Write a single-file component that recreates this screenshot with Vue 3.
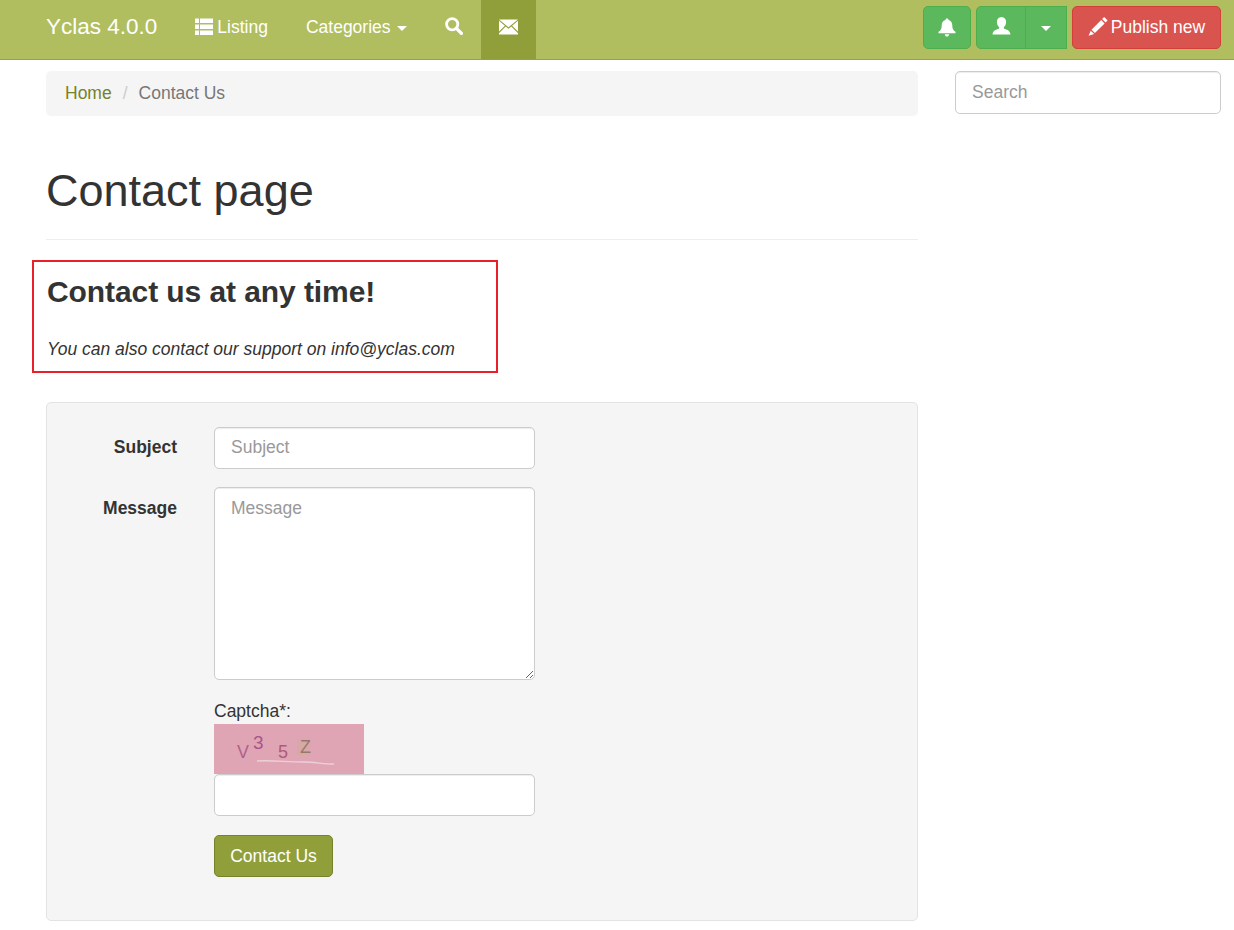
<template>
  <nav class="navbar">
    <a class="brand" href="#">Yclas 4.0.0</a>
    <ul class="nav-items">
      <li v-for="item in navItems" :key="item.key" class="nav-item" :class="{ active: item.active }">
        <svg v-if="item.key === 'listing'" class="nav-icon list-icon" viewBox="0 0 18 18">
          <path fill="currentColor" d="M0 0.500h4v4.500H0zM5 0.500h13v4.500H5zM0 6.500h4v4.500H0zM5 6.500h13v4.500H5zM0 12.500h4v4.500H0zM5 12.500h13v4.500H5z" />
        </svg>
        <svg v-if="item.key === 'search'" class="nav-icon search-icon" viewBox="0 0 18 18">
          <circle cx="7.200" cy="7.200" r="5.600" fill="none" stroke="currentColor" stroke-width="2.800" />
          <path d="M11.400 11.400l5 5" stroke="currentColor" stroke-width="3.400" stroke-linecap="round" />
        </svg>
        <svg v-if="item.key === 'mail'" class="nav-icon mail-icon" viewBox="0 0 19 16">
          <path fill="currentColor" d="M0 0.500h19L9.500 8.300zM0 1.800l5.900 4.900L0 12.600zM19 1.800v10.800l-5.900-5.900zM6.700 7.400l2.800 2.300 2.800-2.300L19 14.300v1.200H0v-1.200z" />
        </svg>
        <span v-if="item.label" :class="{ 'with-icon': item.key === 'listing' }">{{ item.label }}</span>
        <span v-if="item.caret" class="caret"></span>
      </li>
    </ul>
    <div class="nav-buttons">
      <button type="button" class="btn btn-success bell-btn">
        <svg class="btn-icon" viewBox="0 0 18 19">
          <path fill="currentColor" d="M9 0.500c1 0 1.600.6 1.600 1.500 2.500.6 3.700 2.700 3.700 5.400 0 3.200.9 4.900 3.200 6.300v1.500H.500v-1.500c2.300-1.400 3.200-3.100 3.200-6.300 0-2.700 1.200-4.800 3.700-5.400C7.400 1.100 8 .5 9 .5zM6.800 16.200h4.400c-.2 1.400-1.100 2.300-2.200 2.300s-2-.9-2.200-2.300z" />
        </svg>
      </button>
      <div class="btn-group">
        <button type="button" class="btn btn-success user-btn">
          <svg class="btn-icon user-icon" viewBox="0 0 19 18">
            <path fill="currentColor" d="M9.500 0c3 0 4.600 2.200 4.600 5 0 2.200-.9 4-2.200 5.100-.3 1 0 1.600 1 2 2.500.9 5 1.600 5.600 5.400H.500c.6-3.800 3.100-4.500 5.600-5.400 1-.4 1.300-1 1-2C5.800 9 4.900 7.200 4.900 5c0-2.800 1.600-5 4.600-5z" />
          </svg>
        </button>
        <button type="button" class="btn btn-success toggle-btn"><span class="caret"></span></button>
      </div>
      <button type="button" class="btn btn-danger publish-btn">
        <svg class="pencil-icon" viewBox="0 0 20 19">
          <path fill="currentColor" d="M16.200 0l3.400 3.400-2.100 2.100-3.400-3.400zM13.200 3l3.400 3.400-9.700 9.700-3.400-3.400zM2.700 13.700l3.400 3.400L.6 18.700z" />
        </svg>
        <span>Publish new</span>
      </button>
    </div>
  </nav>

  <div class="page">
    <main class="content">
      <ol class="breadcrumb">
        <li><a href="#">Home</a></li>
        <li class="sep">/</li>
        <li class="current">Contact Us</li>
      </ol>

      <div class="page-header">
        <h1>Contact page</h1>
      </div>

      <div class="notice">
        <h3>Contact us at any time!</h3>
        <p><em>You can also contact our support on info@yclas.com</em></p>
      </div>

      <form class="well" @submit.prevent>
        <label class="field-label subject-label" for="subject">Subject</label>
        <input id="subject" class="form-control" type="text" placeholder="Subject" />

        <label class="field-label" for="message">Message</label>
        <textarea id="message" class="form-control message" placeholder="Message"></textarea>

        <div class="captcha">
          <label for="captcha">Captcha*:</label>
          <svg class="captcha-img" viewBox="0 0 150 50">
            <rect width="150" height="50" fill="#e0a5b4" />
            <rect x="83" y="15" width="13" height="16" fill="#d6a8a6" />
            <text x="23" y="34" class="cap-v">V</text>
            <text x="39" y="25" class="cap-3">3</text>
            <text x="64" y="34" class="cap-5">5</text>
            <text x="86" y="29" class="cap-z">Z</text>
            <path d="M43 37c14-1 30 1 46 1 12 0 20 2 31 2" fill="none" stroke="#ebd0da" stroke-width="1.300" />
          </svg>
          <input id="captcha" class="form-control" type="text" />
        </div>

        <button type="submit" class="btn btn-primary submit-btn">Contact Us</button>
      </form>
    </main>

    <aside class="sidebar">
      <input class="form-control" type="text" placeholder="Search" />
    </aside>
  </div>
</template>

<script setup>
const navItems = [
  { key: 'listing', label: 'Listing' },
  { key: 'categories', label: 'Categories', caret: true },
  { key: 'search' },
  { key: 'mail', active: true },
]
</script>

<style>
body {
  background: #fff;
}
</style>

<style scoped>
.navbar {
  height: 59px;
  box-sizing: content-box;
  padding: 0 13px 0 46px;
  background: #b0be5f;
  border-bottom: 1px solid #95a23f;
  display: flex;
  align-items: stretch;
  font-family: "Liberation Sans", Arial, sans-serif;
  font-size: 17.5px;
  color: #fff;
}

.brand {
  color: #fff;
  text-decoration: none;
  font-size: 22.5px;
  line-height: 54px;
  margin-right: 19px;
}

.nav-items {
  display: flex;
  margin: 0;
  padding: 0;
  list-style: none;
}

.nav-item {
  display: flex;
  align-items: center;
  padding: 0 18px 5px;
  line-height: 25px;
}

.nav-item:first-child,
.nav-item:nth-child(2) {
  padding: 0 19px 5px;
}

.nav-item:nth-child(3) {
  padding: 0 18px 5px 19px;
}

.nav-item.active {
  background: #919f3a;
}

.nav-icon {
  display: block;
  flex-shrink: 0;
}

.list-icon {
  width: 18px;
  height: 18px;
}

.with-icon {
  margin-left: 4px;
}

.search-icon {
  width: 18px;
  height: 18px;
  margin-top: -3px;
}

.mail-icon {
  width: 19px;
  height: 16px;
  margin-top: -1px;
}

.caret {
  display: inline-block;
  width: 0;
  height: 0;
  margin-left: 6px;
  margin-top: 2px;
  border-top: 5px solid #fff;
  border-left: 5px solid transparent;
  border-right: 5px solid transparent;
}

.nav-buttons {
  margin-left: auto;
  padding-top: 6px;
  display: flex;
  gap: 5px;
  height: 43px;
}

.btn {
  box-sizing: border-box;
  height: 43px;
  border: 1px solid transparent;
  border-radius: 5px;
  font-family: inherit;
  font-size: 17.5px;
  color: #fff;
  cursor: pointer;
  display: inline-flex;
  align-items: center;
  justify-content: center;
  padding: 0;
}

.btn-success {
  background: #5cb85c;
  border-color: #4cae4c;
}

.btn-danger {
  background: #d9534f;
  border-color: #d43f3a;
}

.btn-primary {
  background: #919f3a;
  border-color: #76822a;
  font-family: "Liberation Sans", Arial, sans-serif;
}

.bell-btn {
  width: 48px;
}

.btn-icon {
  width: 18px;
  height: 19px;
  display: block;
}

.user-icon {
  width: 19px;
  height: 18px;
  margin-top: -3px;
}

.btn-group {
  display: flex;
}

.user-btn {
  width: 50px;
  border-radius: 5px 0 0 5px;
}

.toggle-btn {
  width: 42px;
  margin-left: -1px;
  border-radius: 0;
}

.toggle-btn .caret {
  margin: 2px 0 0;
}

.publish-btn {
  width: 149px;
  gap: 3px;
}

.pencil-icon {
  width: 20px;
  height: 19px;
  display: block;
  margin-top: -3px;
}

.page {
  display: grid;
  grid-template-columns: 872px 266px;
  column-gap: 37px;
  padding: 11px 13px 0 46px;
  font-family: "Liberation Sans", Arial, sans-serif;
  font-size: 17.5px;
  color: #333;
}

.breadcrumb {
  display: flex;
  margin: 0;
  padding: 0 19px;
  height: 45px;
  align-items: center;
  list-style: none;
  background: #f5f5f5;
  border-radius: 5px;
}

.breadcrumb a {
  color: #76822a;
  text-decoration: none;
}

.sep {
  color: #ccc;
  padding: 0 11px;
}

.current {
  color: #777;
}

.page-header {
  margin-top: 47px;
  padding-bottom: 20px;
  border-bottom: 1px solid #eee;
}

h1 {
  margin: 0;
  font-size: 45px;
  font-weight: 400;
  line-height: 56px;
}

.notice {
  box-sizing: border-box;
  width: 466px;
  height: 113px;
  margin: 20px 0 29px -14px;
  padding: 13px 13px 0;
  border: 2px solid #e8202a;
}

h3 {
  margin: 0;
  font-size: 30px;
  font-weight: 700;
  line-height: 34px;
  letter-spacing: -0.08px;
}

.notice p {
  margin: 28px 0 0;
  line-height: 25px;
}

.well {
  box-sizing: border-box;
  height: 519px;
  padding: 24px;
  background: #f5f5f5;
  border: 1px solid #e3e3e3;
  border-radius: 5px;
  display: grid;
  grid-template-columns: 106px 321px;
  column-gap: 37px;
  align-content: start;
  row-gap: 18px;
}

.field-label {
  font-weight: 700;
  text-align: right;
  line-height: 42px;
}

.subject-label {
  line-height: 40px;
}

.form-control {
  box-sizing: border-box;
  display: block;
  width: 100%;
  height: 42px;
  padding: 0 16px 1px;
  background: #fff;
  border: 1px solid #ccc;
  border-radius: 5px;
  font-family: "Liberation Sans", Arial, sans-serif;
  font-size: 17.5px;
  color: #555;
  box-shadow: inset 0 1px 1px rgba(0, 0, 0, 0.075);
}

.form-control::placeholder {
  color: #999;
  opacity: 1;
}

.sidebar .form-control {
  height: 43px;
}

.message {
  height: 193px;
  padding: 8px 16px;
  line-height: 25px;
  resize: vertical;
}

.captcha {
  grid-column: 2;
  margin-top: 1px;
}

.captcha label {
  display: block;
  line-height: 25px;
}

.captcha-img {
  display: block;
  width: 150px;
  height: 50px;
}

.cap-v,
.cap-3,
.cap-5,
.cap-z {
  font-family: "Liberation Sans", sans-serif;
  font-size: 18px;
}

.cap-v {
  fill: #b0608c;
}

.cap-3 {
  fill: #a9558a;
  font-size: 19px;
}

.cap-5 {
  fill: #b05a78;
}

.cap-z {
  fill: #99786c;
}

.submit-btn {
  grid-column: 2;
  width: 119px;
  height: 42px;
  margin-top: 1px;
}
</style>
